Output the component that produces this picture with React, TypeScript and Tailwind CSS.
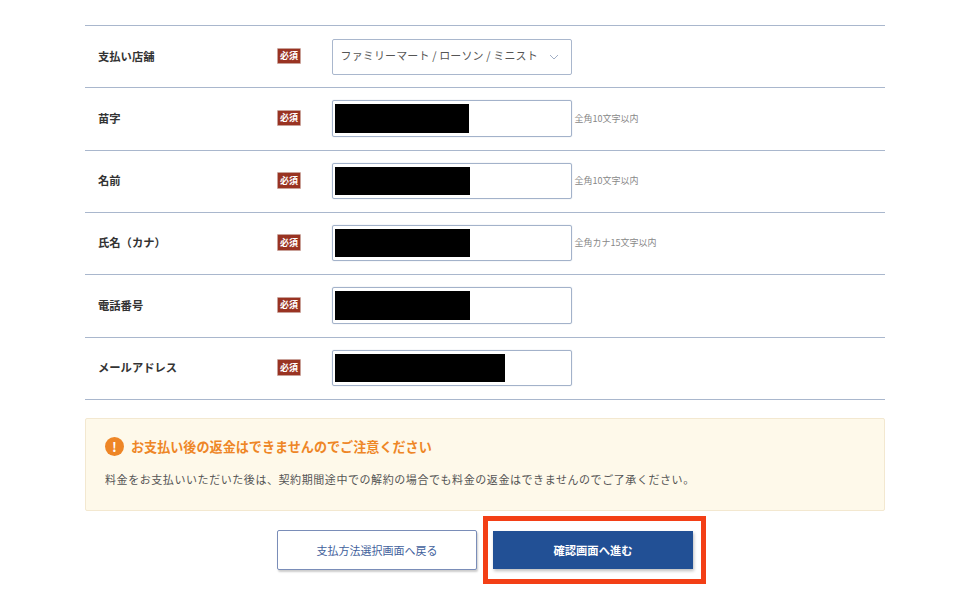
import React from 'react';

const font = { fontFamily: '"Noto Sans CJK JP", "Liberation Sans", sans-serif' };

const rows = [
  { label: '苗字', hint: '全角10文字以内', mask: 'w-[134px]' },
  { label: '名前', hint: '全角10文字以内', mask: 'w-[135px]' },
  { label: '氏名（カナ）', hint: '全角カナ15文字以内', mask: 'w-[135px]' },
  { label: '電話番号', hint: '', mask: 'w-[135px]' },
  { label: 'メールアドレス', hint: '', mask: 'w-[170px]' },
];

const Row = ({ label, lift, children }: { label: string; lift: string; children: React.ReactNode }) => (
  <div className={`flex h-[62.33px] items-center border-b border-[#a9b7cd] pl-[13px] ${lift}`}>
    <div className="w-[179px] pb-[1px] text-[11.3px] font-bold text-[#333]">{label}</div>
    <span className="mb-[1px] flex h-[16.5px] w-[24px] items-center justify-center rounded-[1px] border border-[#c9a199] bg-[#993322] text-[9px] font-bold text-white">
      必須
    </span>
    <div className="ml-[30.5px] flex items-center">{children}</div>
  </div>
);

export default function App() {
  return (
    <div style={font} className="h-[605px] w-[960px] overflow-hidden bg-white pl-[85px] pt-[25px]">
      <div className="w-[800px]">
        <div className="border-t border-[#a9b7cd]">
          <Row label="支払い店舗" lift="">
            <div className="flex h-[36px] w-[240px] items-center justify-between rounded-[2px] border border-[#a9b7cd] pl-[8px] pr-[12px]">
              <span className="whitespace-nowrap pb-[2px] text-[11px] tracking-[0.13px] text-[#555]">ファミリーマート / ローソン / ミニスト</span>
              <svg width="10" height="6" viewBox="0 0 10 6" fill="none" stroke="#8a9bb8" strokeWidth="0.8">
                <path d="M1 1l4 4 4-4" />
              </svg>
            </div>
          </Row>
          {rows.map((r) => (
            <Row key={r.label} label={r.label} lift="pb-[1px]">
              <div className="flex h-[36.5px] w-[240px] items-center rounded-[2px] border border-[#a3b2ca] pl-[2px] shadow-[0_0_1px_#a9b7cd]">
                <div className={`h-[28.5px] bg-black ${r.mask}`} />
              </div>
              {r.hint && <span className="ml-[3px] text-[9px] text-[#888]">{r.hint}</span>}
            </Row>
          ))}
        </div>

        <div className="mt-[18px] h-[93px] rounded-[2px] border border-[#f3e8d0] bg-[#fef9ea] pl-[19px] pt-[18px]">
          <div className="flex items-center">
            <span className="flex h-[19px] w-[19px] items-center justify-center rounded-full bg-[#ee8626] text-[13px] font-bold text-white">
              !
            </span>
            <span className="ml-[7px] text-[13.1px] font-bold text-[#ee8626]">お支払い後の返金はできませんのでご注意ください</span>
          </div>
          <p className="mt-[14px] text-[11px] tracking-[0.57px] text-[#555]">
            料金をお支払いいただいた後は、契約期間途中での解約の場合でも料金の返金はできませんのでご了承ください。
          </p>
        </div>

        <div className="mt-[19px] flex items-center justify-center gap-[16px]">
          <button className="h-[40.5px] w-[200px] rounded-[2px] border border-[#7a8db8] bg-white text-[11px] text-[#3f5f9c] shadow-[1px_2px_2px_rgba(0,0,0,0.2)]">
            支払方法選択画面へ戻る
          </button>
          <div className="relative">
            <button className="block h-[37.5px] w-[200px] bg-[#225095] text-[11.3px] font-bold text-white shadow-[1px_2px_3px_rgba(0,0,0,0.25)]">
              確認画面へ進む
            </button>
            <div className="absolute -left-[10.5px] -right-[12.5px] -top-[15px] h-[68px] border-[5px] border-[#f33f16]" />
          </div>
        </div>
      </div>
    </div>
  );
}
